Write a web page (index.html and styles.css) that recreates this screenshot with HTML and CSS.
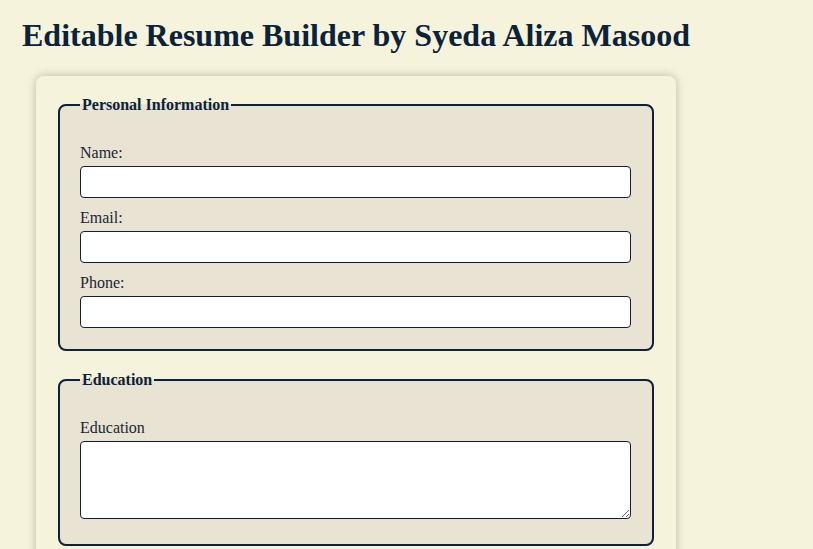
FILE: index.html
```html
<!DOCTYPE html>
<html lang="en">
<head>
<meta charset="utf-8">
<title>Editable Resume Builder</title>
<link rel="stylesheet" href="styles.css">
</head>
<body>
<h1 class="title">Editable Resume Builder by Syeda Aliza Masood</h1>
<div class="container">
  <fieldset class="section">
    <legend class="legend">Personal Information</legend>
    <label class="label" for="name">Name:</label>
    <input class="field" id="name" type="text">
    <label class="label" for="email">Email:</label>
    <input class="field" id="email" type="email">
    <label class="label" for="phone">Phone:</label>
    <input class="field" id="phone" type="tel">
  </fieldset>
  <fieldset class="section">
    <legend class="legend">Education</legend>
    <label class="label" for="edu">Education</label>
    <textarea class="area" id="edu"></textarea>
  </fieldset>
</div>
</body>
</html>
```
FILE: styles.css
```css
html, body {
  background: #f5f3dc;
}
body {
  margin: 0;
  padding: 17px 22px;
  font-family: "Liberation Serif", "Times New Roman", serif;
  color: #0b2239;
}
.title {
  margin: 0 0 22px 0;
  font-size: 32px;
  font-weight: bold;
  color: #0b2239;
}
.container {
  width: 640px;
  margin-left: 14px;
  padding: 20px 20px 10px;
  box-sizing: border-box;
  background: #f5f3dc;
  border-radius: 8px;
  box-shadow: 0 0 10px rgba(0, 0, 0, 0.25);
}
.section {
  margin: 0 2px 20px;
  padding: 19px 21px 21px 20px;
  border: 2px solid #0b2239;
  border-radius: 8px;
  background: #e8e3d3;
}
.legend {
  padding: 0 2px;
  font-weight: bold;
  font-size: 16px;
  color: #0b2239;
}
.label {
  display: block;
  margin: 11px 0 4px;
  font-size: 16px;
  color: #1b2533;
}
.field {
  display: block;
  width: 100%;
  height: 32px;
  box-sizing: border-box;
  border: 1px solid #0b2239;
  border-radius: 4px;
  background: #fff;
  font-family: inherit;
  font-size: 14px;
  margin: 0;
}
.area {
  width: 100%;
  height: 78px;
  box-sizing: border-box;
  border: 1px solid #0b2239;
  border-radius: 4px;
  background: #fff;
  font-family: inherit;
  font-size: 14px;
  margin: 0;
}
```
